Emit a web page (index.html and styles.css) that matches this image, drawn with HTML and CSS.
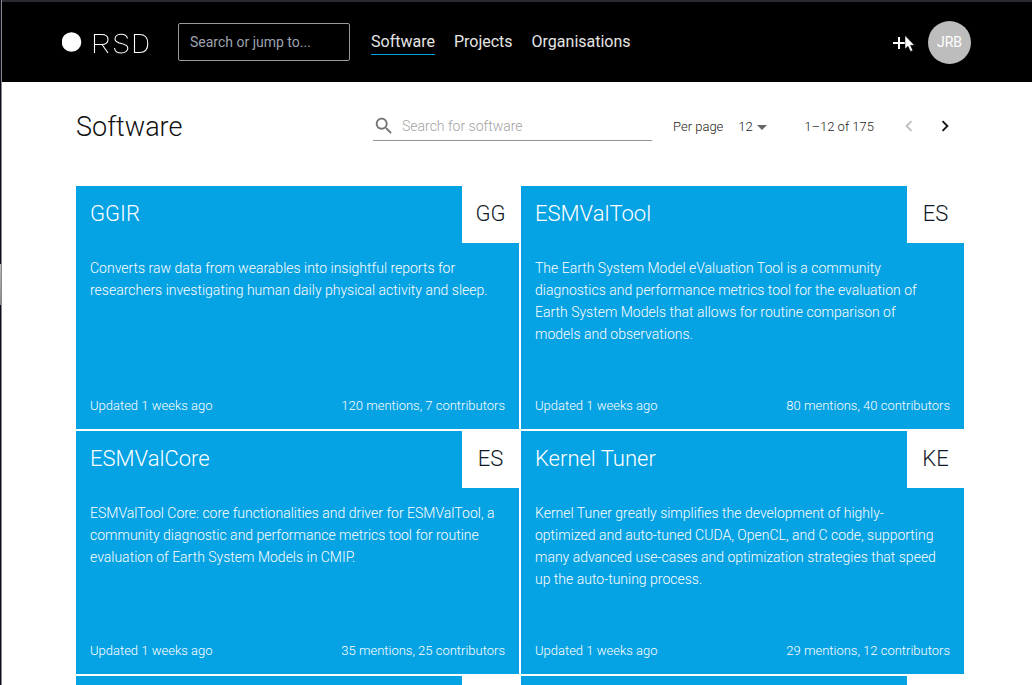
FILE: index.html
```
<!DOCTYPE html>
<html lang="en">
<head>
<meta charset="utf-8">
<meta name="viewport" content="width=device-width, initial-scale=1">
<title>Software | RSD</title>
<link rel="stylesheet" href="styles.css">
</head>
<body>
<div class="page">
  <header class="topbar">
    <a class="brand" href="#" aria-label="RSD home">
      <svg class="brand-logo" width="88" height="22" viewBox="0 0 88 22" fill="none" stroke="#fff" stroke-width="1.1" aria-hidden="true">
        <circle cx="9.500" cy="10" r="9.800" fill="#fff" stroke="none"/>
        <path d="M32.500 21V2.500H39.500C44 2.500 46 4.500 46 7.500S44 12.500 39.500 12.500H32.500M40 12.500L46 21"/>
        <path d="M65.500 6.500C65 3.500 62.500 2.200 59.200 2.200S53 4 53 7C53 9.700 55 10.600 59.300 11.500S65.800 13.600 65.800 16.300S63 21 59.500 21S52.800 19.500 52.500 16"/>
        <path d="M72.500 2.500H77.500C83 2.500 85.800 6 85.800 11.500S83 20.500 77.500 20.500H72.500Z"/>
      </svg>
    </a>
    <input class="global-search" type="search" placeholder="Search or jump to..." aria-label="Search or jump to">
    <nav class="nav">
      <a class="nav-link active" href="#">Software</a>
      <a class="nav-link" href="#">Projects</a>
      <a class="nav-link" href="#">Organisations</a>
    </nav>
    <div class="account">
      <button class="add" type="button" aria-label="Add">
        <svg width="12" height="14" viewBox="0 0 12 14" fill="none" stroke="#fff" stroke-width="2" aria-hidden="true"><path d="M0 7H12M6 1V13"/></svg>
        <svg class="pointer" width="11" height="17" viewBox="0 0 11 17" fill="#fff" stroke="#000" stroke-width=".5" aria-hidden="true"><path d="M1 .5V14L4 11.200L6.500 16.500L8.800 15.500L6.500 10.300H10.500Z"/></svg>
      </button>
      <button class="avatar" type="button">JRB</button>
    </div>
  </header>

  <main class="content">
    <div class="toolbar">
      <h1 class="title">Software</h1>
      <label class="search">
        <svg width="22" height="22" viewBox="0 0 24 24" fill="#757575" aria-hidden="true"><path d="M15.500 14h-.79l-.28-.27C15.410 12.590 16 11.110 16 9.500 16 5.910 13.090 3 9.500 3S3 5.910 3 9.500 5.910 16 9.500 16c1.610 0 3.090-.59 4.230-1.570l.27.28v.79l5 4.990L20.490 19l-4.990-5zm-6 0C7.010 14 5 11.990 5 9.500S7.010 5 9.500 5 14 7.010 14 9.500 11.990 14 9.500 14z"/></svg>
        <input class="search-input" type="search" placeholder="Search for software" aria-label="Search for software">
      </label>
      <div class="pagination">
        <label class="per-page" for="rows">Per page</label>
        <span class="select-wrap">
          <select class="rows" id="rows"><option>12</option><option>24</option><option>48</option></select>
          <svg class="caret" width="10" height="5" viewBox="0 0 10 5" fill="#666" aria-hidden="true"><path d="M0 0H10L5 5Z"/></svg>
        </span>
        <span class="range">1–12 of 175</span>
        <button class="page-button" type="button" aria-label="Previous page" disabled>
          <svg width="22" height="22" viewBox="0 0 24 24" fill="currentColor" aria-hidden="true"><path d="M15.410 7.410L14 6l-6 6 6 6 1.410-1.410L10.830 12z"/></svg>
        </button>
        <button class="page-button" type="button" aria-label="Next page">
          <svg width="22" height="22" viewBox="0 0 24 24" fill="currentColor" aria-hidden="true"><path d="M10 6L8.590 7.410 13.170 12l-4.580 4.590L10 18l6-6z"/></svg>
        </button>
      </div>
    </div>

    <section class="cards">
      <a class="card" href="#">
        <span class="card-head"><span class="card-title">GGIR</span><span class="initials">GG</span></span>
        <span class="description">Converts raw data from wearables into insightful reports for researchers investigating human daily physical activity and sleep.</span>
        <span class="card-foot"><span>Updated 1 weeks ago</span><span>120 mentions, 7 contributors</span></span>
      </a>
      <a class="card" href="#">
        <span class="card-head"><span class="card-title">ESMValTool</span><span class="initials">ES</span></span>
        <span class="description">The Earth System Model eValuation Tool is a community diagnostics and performance metrics tool for the evaluation of Earth System Models that allows for routine comparison of models and observations.</span>
        <span class="card-foot"><span>Updated 1 weeks ago</span><span>80 mentions, 40 contributors</span></span>
      </a>
      <a class="card" href="#">
        <span class="card-head"><span class="card-title">ESMValCore</span><span class="initials">ES</span></span>
        <span class="description">ESMValTool Core: core functionalities and driver for ESMValTool, a community diagnostic and performance metrics tool for routine evaluation of Earth System Models in CMIP.</span>
        <span class="card-foot"><span>Updated 1 weeks ago</span><span>35 mentions, 25 contributors</span></span>
      </a>
      <a class="card" href="#">
        <span class="card-head"><span class="card-title">Kernel Tuner</span><span class="initials">KE</span></span>
        <span class="description">Kernel Tuner greatly simplifies the development of highly-optimized and auto-tuned CUDA, OpenCL, and C code, supporting many advanced use-cases and optimization strategies that speed up the auto-tuning process.</span>
        <span class="card-foot"><span>Updated 1 weeks ago</span><span>29 mentions, 12 contributors</span></span>
      </a>
      <div class="card"><span class="card-head"><span class="card-title"></span><span class="initials"></span></span></div>
      <div class="card"><span class="card-head"><span class="card-title"></span><span class="initials"></span></span></div>
    </section>
  </main>
</div>
</body>
</html>
```
FILE: styles.css
```
* { box-sizing: border-box; }

body {
  margin: 0;
  background: #fff;
  color: #111;
  font-family: Roboto, "Liberation Sans", sans-serif;
  font-size: 14px;
  font-weight: 300;
}

a { color: inherit; text-decoration: none; }
button, input, select { font: inherit; }
button { padding: 0; border: 0; background: none; }
input::placeholder { opacity: 1; }
svg { display: block; flex: none; }

/* The left edge shows the window frame with its grip. */
.page {
  height: 100vh;
  overflow: hidden;
  padding-left: 2px;
  background:
    linear-gradient(#bbb, #888) 0 264px / 1px 41px no-repeat,
    linear-gradient(#0a0a18, #0a0a18) 0 0 / 1px 100% no-repeat,
    linear-gradient(#8a8a8a, #8a8a8a) 1px 0 / 1px 100% no-repeat,
    #fff;
}

.topbar {
  display: flex;
  align-items: center;
  height: 82px;
  padding: 0 61px 0 60px;
  border-top: 2px solid #2b2a33;
  background: #000;
  color: #e5e5e5;
}

.brand {
  margin-right: 28px;
  padding-top: 2px;
}

.global-search {
  width: 172px;
  height: 38px;
  padding: 0 11px;
  border: 1px solid #9a9a9a;
  border-radius: 2px;
  outline: 0;
  background: #000;
  color: #fff;
  font-weight: 400;
}
.global-search::placeholder { color: #9ca3af; }

.nav {
  display: flex;
  gap: 19px;
  margin-left: 21px;
  font-size: 16px;
  font-weight: 400;
}
.nav-link {
  padding-top: 1px;
  border-bottom: 1px solid transparent;
  line-height: 24px;
}
.nav-link.active { border-bottom-color: #00a3e3; }

.account {
  display: flex;
  align-items: center;
  gap: 15px;
  margin-left: auto;
}
.add {
  position: relative;
  display: flex;
  align-items: center;
  width: 20px;
  height: 20px;
  padding-top: 2px;
}
.pointer { position: absolute; left: 11px; top: 3px; }
.avatar {
  width: 43px;
  height: 43px;
  border-radius: 50%;
  background: #bdbdbd;
  color: #fff;
  font-weight: 400;
}

.content { padding: 0 68px 0 74px; }

.toolbar {
  display: flex;
  align-items: center;
  height: 88px;
  margin-bottom: 16px;
}
.title {
  flex: 1;
  margin: 0;
  padding-top: 2px;
  font-size: 27px;
  font-weight: 300;
}
.search {
  display: flex;
  align-items: center;
  gap: 7px;
  width: 279px;
  height: 30px;
  border-bottom: 1px solid #949494;
}
.search-input {
  flex: 1;
  min-width: 0;
  padding: 0;
  border: 0;
  outline: 0;
  background: none;
  color: #222;
}
.search-input::placeholder { color: #a3a3a3; }

.pagination {
  display: flex;
  align-items: center;
  margin: 0 8px 0 21px;
  color: #222;
  font-size: 13px;
}
.per-page { margin-right: 15px; }
.select-wrap { position: relative; }
.rows {
  width: 32px;
  padding: 0;
  border: 0;
  outline: 0;
  appearance: none;
  background: none;
  color: #222;
}
.caret { position: absolute; right: 3px; top: 6px; pointer-events: none; }
.range { margin: 0 24px 0 34px; }
.page-button { color: #111; }
.page-button + .page-button { margin-left: 14px; }
.page-button:disabled { color: #bdbdbd; }

.cards {
  display: grid;
  grid-template-columns: repeat(2, minmax(0, 1fr));
  gap: 2px;
}
.card {
  display: flex;
  flex-direction: column;
  height: 243px;
  background: #05a2e4;
  color: #fff;
}
.card-head {
  display: flex;
  justify-content: space-between;
  font-size: 22px;
  line-height: 55px;
}
.card-title { padding-left: 14px; }
.initials {
  width: 57px;
  height: 57px;
  background: #fff;
  color: #111827;
  text-align: center;
}
.description {
  flex: 1;
  padding: 14px 23px 0 14px;
  font-size: 14px;
  line-height: 22px;
}
.card-foot {
  display: flex;
  justify-content: space-between;
  padding: 0 14px 16px;
  font-size: 13px;
  line-height: 15px;
}
```
